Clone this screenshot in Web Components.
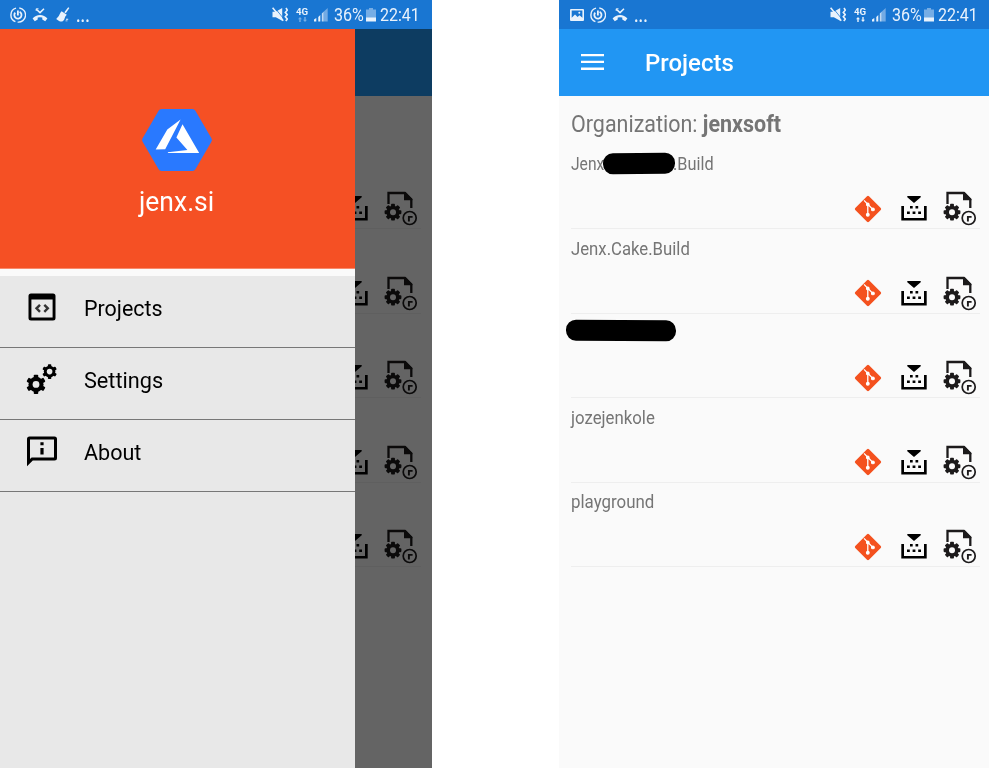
<!DOCTYPE html>
<html lang="en">
<head>
<meta charset="utf-8">
<title>Projects</title>
<style>
html,body{margin:0;height:100%;background:#fff;overflow:hidden}
body{font-family:Roboto,"Liberation Sans",sans-serif;display:flex;justify-content:space-between;height:768px;width:989px}
.left{width:432px}
.right{width:430.5px}
</style>
</head>
<body>
<phone-screen class="left">
  <status-bar slot="status" icons="ring missed broom" faint></status-bar>
  <project-page dimmed></project-page>
  <nav-drawer slot="drawer"></nav-drawer>
</phone-screen>
<phone-screen class="right">
  <status-bar slot="status" icons="picture ring missed"></status-bar>
  <project-page></project-page>
</phone-screen>
<script>
let gearCount = 0;
const gear = (cx, cy, r, hole, teeth) => {
  let p = '';
  for (let i = 0; i < teeth; i++) {
    const a = 360 / teeth * i;
    p += `<rect x="${cx - r * .23}" y="${cy - r}" width="${r * .46}" height="${r}" rx=".8" transform="rotate(${a} ${cx} ${cy})"/>`;
  }
  // The mask keeps the hub open where the teeth would cross it.
  const id = `hub${gearCount++}`;
  return `<mask id="${id}" maskUnits="userSpaceOnUse" x="0" y="0" width="60" height="60"><rect width="60" height="60" fill="#fff"/><circle cx="${cx}" cy="${cy}" r="${hole}" fill="#000"/></mask><g mask="url(#${id})">${p}<circle cx="${cx}" cy="${cy}" r="${r * .78}"/></g>`;
};
const ICONS = {
  ring: [16, 16, `<g fill="none" stroke="currentColor"><path d="M6 1.2A7.1 7.1 0 0 0 5.4 14.6M7.6 15.1A7.1 7.1 0 0 0 9.3 1" stroke-width="1.4"/><path d="M5.2 5.6A3.6 3.6 0 1 0 9.6 4.8" stroke-width="1.8"/><path d="M7.9 3.4V8.6" stroke-width="1.8"/></g>`],
  missed: [16, 14, `<path d="M4.3 1.2 8 4.6 12 .8" fill="none" stroke="currentColor" stroke-width="1.5"/><path d="M4.2 2.9V.8H6.5" fill="none" stroke="currentColor" stroke-width="1"/><path d="M.6 10.6C4.3 5.8 11.7 5.8 15.4 10.6L13.2 13.2 10.3 11.6V9.6Q8 9 5.7 9.6V11.6L2.8 13.2Z"/>`],
  broom: [14, 15, `<path d="M12.2.2 13.4 1 9.8 6.3 8.3 5.2ZM5.6 4.2 10.8 7.8 9.3 9.6 4.4 5.8ZM4.4 5.8 9.3 9.4Q8.6 13 6.3 14.6L5 14.4 4 14.6 2.3 13.6.2 11.9Q3 9.8 4.4 5.8ZM10 11.7H12.2V12.7H10ZM9.5 13.5H11.5V14.3H9.5Z"/>`],
  picture: [14, 12, `<path fill-rule="evenodd" d="M1 0H13Q14 0 14 1V11Q14 12 13 12H1Q0 12 0 11V1Q0 0 1 0ZM1.7 1.5V8.7L5 5.4 7.6 8 9.5 6.3 12.4 8.8V1.5Z"/><circle cx="9.3" cy="3.7" r="1"/>`],
  mute: [16, 15, `<path d="M.5 4.8H3.8L10.2 1V13.8L3.8 10.2H.5Z"/><path d="M2.6.6 11.4 11.4" stroke="#1976d2" stroke-width=".8"/><path d="M.6.8 11.2 13.8" stroke="currentColor" stroke-width="1.6"/><path d="M14 1 15.3 3.2 13.3 5.4 15.3 7.6 13.3 9.8 15.3 12 13.8 14" fill="none" stroke="currentColor" stroke-width="1.6"/>`],
  arrows: [9, 5, `<path d="M2 0 4 2.2H2.7V5H1.3V2.2H0ZM6.3 0H7.7V2.8H9L7 5 5 2.8H6.3Z"/>`],
  signal: [14, 14, `<path d="M0 11.5 2.3 10V13.5H0ZM4.3 9 6.3 7V13.5H4.3Z"/><path d="M7.8 5.4 9.6 3.7V13.5H7.8Z" opacity=".8"/><path d="M9.6 3.7 13.7 0V13.5H9.6Z" opacity=".43"/>`],
  battery: [10, 14, `<path opacity=".45" d="M3 0H7V1.4H10V10H0V1.4H3Z"/><path d="M0 9.5H10V13.5H0Z"/>`],
  menu: [23, 17, `<path d="M0 0H23V2.3H0ZM0 6.8H23V9.1H0ZM0 13.6H23V15.9H0Z"/>`],
  git: [28, 28, `<rect x="4.3" y="4.3" width="19.4" height="19.4" rx="1.4" fill="#f4511e" transform="rotate(45 14 14)"/><g stroke="#fff" stroke-width="1.1" fill="#fff"><path d="M10 5.4 13.8 9.2V20M14 9.5 18.8 14.4" fill="none" stroke-width="1.3"/><circle cx="13.8" cy="9.4" r="1.3"/><circle cx="13.8" cy="19.8" r="1.4"/><circle cx="18.9" cy="14.4" r="1.4"/></g>`],
  build: [32, 33, `<rect width="32" height="33" fill="#fff" opacity=".15"/><path d="M3.3 14H6V26H26V14H28.7V28.6H3.3ZM9.3 4H22.7V5.2L16 11 9.3 5.2Z"/><path d="M12 13.9H14.7V16.4H12ZM17.5 13.9H20.2V16.4H17.5ZM9 19.5H11.8V22H9ZM14.6 19.5H17.4V22H14.6ZM20.2 19.5H23V22H20.2Z"/>`],
  release: [34, 35, `<path d="M4.5 13V2H20.8L27.3 8.5V17" fill="none" stroke="currentColor" stroke-width="2.3"/><path d="M20 1.5V9.3H28.4V8L21.6 1Z"/>${gear(9, 21.2, 8.4, 3, 8)}<circle cx="25.7" cy="27" r="6.5" fill="none" stroke="currentColor" stroke-width="1.7"/><path d="M24.9 30.6V25.9H28.6" fill="none" stroke="currentColor" stroke-width="1.9"/>`],
  code: [28, 28, `<path fill-rule="evenodd" d="M3 .5H25Q27.5.5 27.5 3V25Q27.5 27.5 25 27.5H3Q.5 27.5.5 25V3Q.5.5 3 .5ZM3.4 6.5V24.6H24.6V6.5Z"/><path d="M12 11.8 8.5 15.3 12 18.8M16.3 11.8 19.8 15.3 16.3 18.8" fill="none" stroke="#333" stroke-width="2.4"/>`],
  gears: [32, 32, `${gear(10, 21.4, 9.7, 3.4, 6)}${gear(23.6, 8.6, 7.4, 2.8, 6)}`],
  about: [32, 31, `<path fill-rule="evenodd" d="M3.5.5H28.5Q31 .5 31 3V22Q31 24.5 28.5 24.5H6.8L1 30.2V3Q1 .5 3.5 .5ZM4 3.5V23L5.6 21.5H28V3.5Z"/><path d="M14.4 6.3H17.6V9.3H14.4ZM14.4 12H17.6V18.5H14.4Z"/>`],
  logo: [70, 62, `<path d="M19.5 0H50.5Q52.5 0 53.4 1.7L69.4 29.3Q70.4 31 69.4 32.7L53.4 60.3Q52.5 62 50.5 62H19.5Q17.5 62 16.6 60.3L.6 32.7Q-.4 31 .6 29.3L16.6 1.7Q17.5 0 19.5 0Z" fill="#2979ff"/><path fill="#fff" d="M38.6 10.6 25.3 20.4 13.7 40.6 23.2 40.2ZM40.5 15.2 57.2 44H26L25.8 43.2 45.4 41 34.4 28.6Z"/>`]
};
class Base extends HTMLElement {
  connectedCallback() {
    if (!this.shadowRoot) { this.attachShadow({ mode: 'open' }).innerHTML = this.render(); this.ready?.(); }
  }
}
customElements.define('ui-icon', class extends Base {
  render() {
    const [w, h, body] = ICONS[this.getAttribute('name')];
    return `<style>:host{display:block;flex:none;width:${w}px;height:${h}px}svg{display:block}</style><svg width="${w}" height="${h}" viewBox="0 0 ${w} ${h}" fill="currentColor">${body}</svg>`;
  }
});
// A single line of text whose glyphs are scaled horizontally to a given width.
customElements.define('fit-text', class extends Base {
  render() {
    return `<style>:host{display:block;flex:none;width:${this.getAttribute('w')}px;white-space:nowrap}span{display:inline-block;transform-origin:0 50%}</style><span><slot></slot></span>`;
  }
  ready() {
    const s = this.shadowRoot.querySelector('span');
    s.style.transform = `scaleX(${this.getAttribute('w') / s.offsetWidth})`;
  }
});
customElements.define('status-bar', class extends Base {
  render() {
    const left = this.getAttribute('icons').split(' ').map(n => `<ui-icon name="${n}"></ui-icon>`).join('');
    const faint = this.hasAttribute('faint');
    return `<style>
:host{display:flex;justify-content:space-between;height:28.5px;box-sizing:border-box;padding:1px ${faint ? 12 : 11}px 0 ${faint ? 10 : 11}px;background:#1976d2;color:#e9f2fc;font-size:18px;line-height:28px}
div{display:flex;align-items:center}
.l{gap:6.4px}.l ui-icon{margin-top:-.5px}.l ui-icon[name=broom]{margin-left:1px}.dots{font-size:20px;font-weight:500;align-self:flex-start;margin-left:-.5px}
.net{display:flex;flex-direction:column;align-items:center;gap:1px;margin:0 5.5px 0 8.5px;font-size:8.5px;font-weight:700;line-height:8px}
.net ui-icon{opacity:${faint ? .45 : 1}}
.pct{margin:0 2.5px 0 5.5px}.clock{margin-left:4.5px}
</style><div class="l">${left}<fit-text class="dots" w="14">...</fit-text></div>
<div><ui-icon name="mute"></ui-icon><span class="net"><fit-text w="12.5">4G</fit-text><ui-icon name="arrows"></ui-icon></span><ui-icon name="signal"></ui-icon><fit-text class="pct" w="29.5">36%</fit-text><ui-icon name="battery"></ui-icon><fit-text class="clock" w="40">22:41</fit-text></div>`;
  }
});
customElements.define('app-bar', class extends Base {
  render() {
    return `<style>:host{display:flex;align-items:center;height:67.5px;box-sizing:border-box;padding:0 22px;gap:41.5px;background:#2196f3;color:#fff;font-size:24.5px;font-weight:500;line-height:32px}fit-text{padding-top:2px}</style><ui-icon name="menu"></ui-icon><fit-text w="89"><slot></slot></fit-text>`;
  }
});
customElements.define('project-row', class extends Base {
  render() {
    return `<style>
:host{display:flex;flex-direction:column;justify-content:space-between;height:84.5px;box-sizing:border-box;border-bottom:1px solid #eee;color:#757575;font-size:17.5px}
.name{display:flex;align-items:center;height:38px;line-height:38px}
::slotted(fit-text){margin-top:1px}
.actions{display:flex;justify-content:flex-end;align-items:center;color:#1c1a1b;height:39px;margin-right:3px}
ui-icon[name=build]{color:#000;margin:0 13.5px 0 16px}
</style><div class="name"><slot></slot></div><div class="actions"><ui-icon name="git"></ui-icon><ui-icon name="build"></ui-icon><ui-icon name="release"></ui-icon></div>`;
  }
});
customElements.define('redaction-bar', class extends Base {
  render() {
    return `<style>:host{display:block;flex:none;height:20.5px;width:${this.getAttribute('w')}px;border-radius:10px;background:#000;position:relative;z-index:1}</style>`;
  }
});
customElements.define('project-page', class extends Base {
  render() {
    const d = this.hasAttribute('dimmed');
    const rows = d ? Array(5).fill('<project-row></project-row>').join('') : `
<project-row><fit-text w="33">Jenx</fit-text><redaction-bar w="71.5" style="margin:0 -1px 0 -1px;transform:rotate(-.6deg)"></redaction-bar><fit-text w="41">.Build</fit-text></project-row>
<project-row><fit-text w="118.5">Jenx.Cake.Build</fit-text></project-row>
<project-row><redaction-bar w="110" style="margin:-4px 0 0 -5px;transform:rotate(.4deg)"></redaction-bar></project-row>
<project-row><fit-text w="83.5">jozejenkole</fit-text></project-row>
<project-row><fit-text w="83">playground</fit-text></project-row>`;
    return `<style>
:host{display:block;height:739.5px;background:#fafafa;position:relative}
.bar{height:67.5px;background:#2196f3}
main{padding:0 ${d ? 11 : 9}px 0 12px;display:flex;flex-direction:column}
h2{margin:0;height:48.5px;box-sizing:border-box;padding-top:7px;font-size:23px;line-height:44px;font-weight:400;color:#757575}
.scrim{position:absolute;inset:0;background:rgba(0,0,0,.6)}
</style>${d ? '<div class="bar"></div>' : '<app-bar>Projects</app-bar>'}<main><h2>${d ? '' : '<fit-text w="210">Organization: <b>jenxsoft</b></fit-text>'}</h2>${rows}</main>${d ? '<div class="scrim"></div>' : ''}`;
  }
});
customElements.define('menu-item', class extends Base {
  render() {
    return `<style>:host{display:flex;align-items:center;height:72px;box-sizing:border-box;padding:0 0 6px 26px;border-bottom:1px solid #777;color:#000;font-size:22.5px;line-height:32px}
.i{width:58px;display:flex}ui-icon[name=code]{margin-left:2px}ui-icon{margin-top:-2px}</style><div class="i"><ui-icon name="${this.getAttribute('icon')}"></ui-icon></div><fit-text w="${this.getAttribute('w')}"><slot></slot></fit-text>`;
  }
});
customElements.define('nav-drawer', class extends Base {
  render() {
    return `<style>
:host{display:flex;flex-direction:column;width:355px;height:739.5px;background:#e8e8e8}
header{height:240px;box-sizing:border-box;padding:80.5px 2px 0 0;display:flex;flex-direction:column;align-items:center;gap:14px;background:#f55024;color:#fff;font-size:27px;line-height:34px;border-bottom:1px solid #f88a6b}
nav{border-top:7.5px solid #fafafa}
</style><header><ui-icon name="logo"></ui-icon><fit-text w="75.5">jenx.si</fit-text></header>
<nav><menu-item icon="code" w="79">Projects</menu-item><menu-item icon="gears" w="79">Settings</menu-item><menu-item icon="about" w="57.5">About</menu-item></nav>`;
  }
});
customElements.define('phone-screen', class extends Base {
  render() {
    return `<style>:host{display:block;position:relative;height:768px;overflow:hidden;flex:none}slot[name=drawer]{display:block;position:absolute;left:0;top:28.5px}</style><slot name="status"></slot><slot></slot><slot name="drawer"></slot>`;
  }
});
</script>
</body>
</html>
